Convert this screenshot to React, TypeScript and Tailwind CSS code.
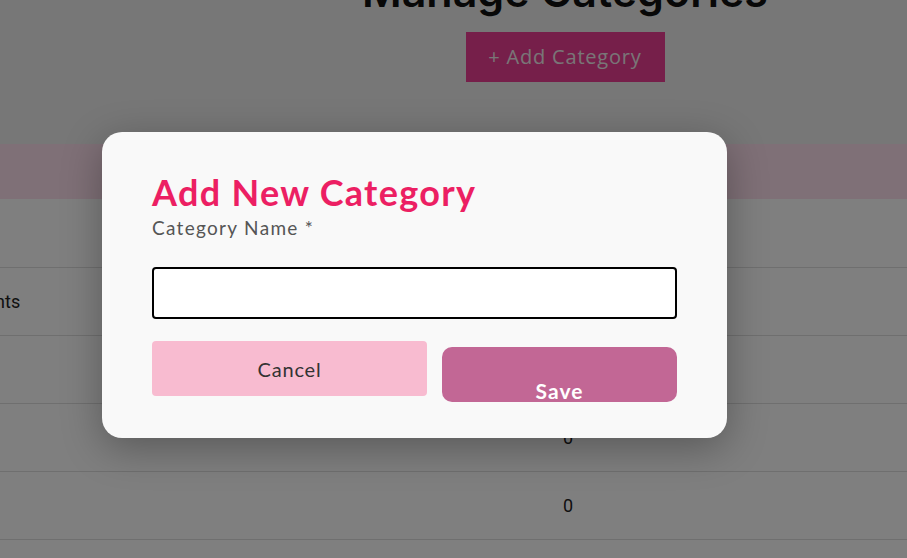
import { useState } from 'react'

const rows = [
  { name: 'Bags', count: '0' },
  { name: 'Supplements', count: '0' },
  { name: 'Shoes', count: '0' },
  { name: 'Hats', count: '0' },
  { name: 'Toys', count: '0' },
  { name: 'Gifts', count: '0' },
]

export default function App() {
  const [name, setName] = useState('')

  return (
    <div className="relative h-[558px] w-[907px] overflow-hidden bg-[#eeeeee] font-['Open_Sans',sans-serif]">
      {/* page behind the dialog */}
      <div className="ml-[-135px] w-[1400px]">
        <h1 className="mt-[-33px] text-center font-['Inter',sans-serif] text-[43px] font-semibold leading-[48px] text-[#111]">
          Manage Categories
        </h1>
        <div className="mt-[17px] flex justify-center">
          <button className="h-[50px] w-[199px] bg-[#ec3e94] font-['Open_Sans',sans-serif] text-[20px] tracking-[0.8px] text-[#f3ecef]">
            + Add Category
          </button>
        </div>

        <table className="mt-[62px] w-full table-fixed border-collapse bg-white font-['Roboto',sans-serif] text-[18px] text-[#222]">
          <thead>
            <tr className="h-[55px] bg-[#fee0ee]">
              <th className="w-[155px]" />
              <th className="w-[1096px]" />
              <th />
            </tr>
          </thead>
          <tbody>
            {rows.map(r => (
              <tr key={r.name} className="h-[68px] border-b border-[#dedede]">
                <td className="pl-[50px]">{r.name}</td>
                <td className="text-center">{r.count}</td>
                <td />
              </tr>
            ))}
          </tbody>
        </table>
      </div>

      {/* overlay */}
      <div className="absolute inset-0 flex items-start justify-center bg-black/50">
        <div className="ml-[-78px] mt-[132px] w-[625px] rounded-[20px] bg-[#f9f9f9] px-[50px] pb-[36px] pt-[40px] shadow-[0_10px_40px_rgba(0,0,0,0.3)] font-['Lato',sans-serif]">
          <h2 className="text-[36px] font-bold leading-[40px] tracking-[1.3px] text-[#ec1f63]">Add New Category</h2>
          <label className="mt-[4px] block text-[19px] leading-[24px] tracking-[1.3px] text-[#555]">Category Name *</label>
          <input
            value={name}
            onChange={e => setName(e.target.value)}
            className="mt-[27px] block h-[52px] w-full rounded-[4px] border-2 border-black bg-white px-3 outline-none"
          />
          <div className="mt-[22px] flex items-start gap-[15px]">
            <button className="h-[55px] w-[275px] rounded-[4px] bg-[#f8bbd0] text-[20px] tracking-[0.8px] text-[#333]">Cancel</button>
            <button className="mt-[6px] flex h-[55px] flex-1 items-end justify-center rounded-[10px] bg-[#c26795] pb-[2px] text-[21px] font-bold leading-[18px] tracking-[1px] text-white">
              Save
            </button>
          </div>
        </div>
      </div>
    </div>
  )
}
